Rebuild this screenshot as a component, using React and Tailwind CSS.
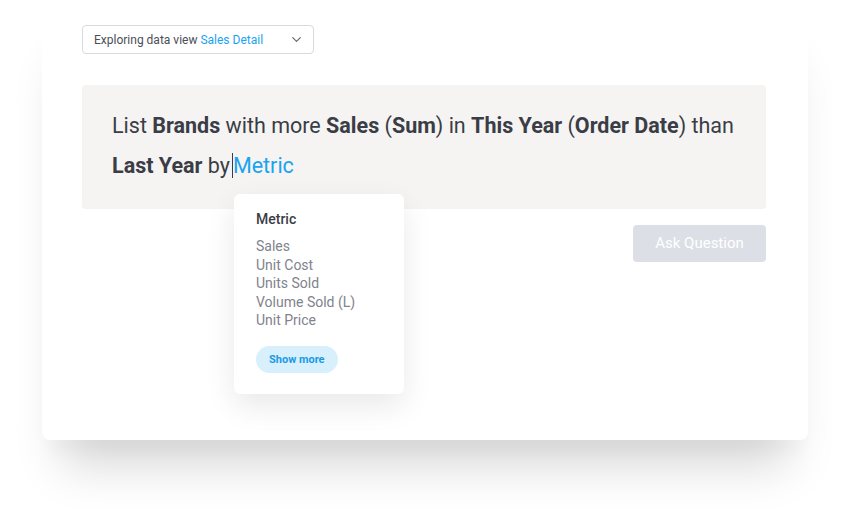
import { ChevronDown } from 'lucide-react';

const metrics = ['Sales', 'Unit Cost', 'Units Sold', 'Volume Sold (L)', 'Unit Price'];

export default function App() {
  return (
    <div className="w-[850px] h-[526px] bg-white overflow-hidden" style={{ fontFamily: 'Roboto, "Liberation Sans", sans-serif' }}>
      <div className="mx-[42px] w-[766px] rounded-b-lg bg-white pl-[40px] pr-[42px] pt-[25px] pb-[178px] shadow-[0_45px_45px_-20px_rgba(0,0,0,0.16),0_20px_14px_-6px_rgba(0,0,0,0.02)]">
        {/* data view picker */}
        <div className="flex h-[29px] w-[232px] items-center justify-between rounded border border-[#d6d9de] pl-[11px] pr-[9px] text-[12px]">
          <span className="text-[#4b4e57]">
            Exploring data view <span className="text-[#1aa3f0]">Sales Detail</span>
          </span>
          <ChevronDown size={15} strokeWidth={2} className="text-[#6b6f78]" />
        </div>

        {/* question box */}
        <div className="relative mt-[31px] rounded bg-[#f5f4f3] pl-[30px] pr-[20px] pt-[21px] pb-[23px] text-[21.5px] leading-[40px] text-[#3a3d46]">
          <p className="whitespace-nowrap">
            List <b className="font-bold">Brands</b> with more <b className="font-bold">Sales</b> (<b className="font-bold">Sum</b>) in{' '}
            <b className="font-bold">This Year</b> (<b className="font-bold">Order Date</b>) than
            <br />
            <b className="font-bold">Last Year</b> by<span className="ml-[2px] inline-block h-[25px] w-px bg-[#3a3d46] align-[-5px]" />
            <span className="text-[#1aa3f0]">Metric</span>
          </p>

          {/* suggestion popup */}
          <div className="absolute left-[152px] top-[109px] z-10 w-[170px] rounded-md bg-white px-[22px] pt-[15px] pb-[21px] leading-normal shadow-[0_12px_30px_rgba(0,0,0,0.09)]">
            <div className="text-[14px] font-medium leading-[20px] text-[#3a3d46]">Metric</div>
            <ul className="mt-[8px] text-[14px] leading-[18.5px] text-[#7f838d]">
              {metrics.map((m) => (
                <li key={m}>{m}</li>
              ))}
            </ul>
            <button className="mt-[16px] flex h-[27px] items-center rounded-full bg-[#d8effc] px-[13px] text-[11px] font-bold leading-none text-[#1a9be6]">
              Show more
            </button>
          </div>
        </div>

        <div className="mt-[16px] flex justify-end">
          <button className="h-[37px] w-[133px] rounded bg-[#dcdfe5] text-[15px] text-white">Ask Question</button>
        </div>
      </div>
    </div>
  );
}
